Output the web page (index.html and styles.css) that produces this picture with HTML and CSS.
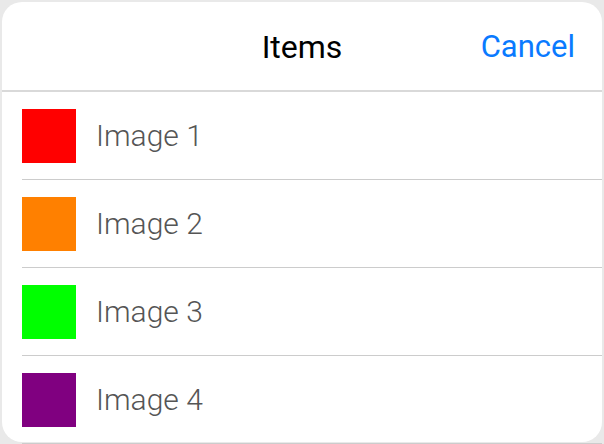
FILE: index.html
```html
<!DOCTYPE html>
<html>
<head>
<meta charset="utf-8">
<link rel="stylesheet" href="styles.css">
</head>
<body>
<div class="sheet">
  <div class="header">
    <div class="title">Items</div>
    <div class="cancel">Cancel</div>
  </div>
  <ul class="list">
    <li class="row"><span class="swatch red"></span><span class="label">Image 1</span></li>
    <li class="row"><span class="swatch orange"></span><span class="label">Image 2</span></li>
    <li class="row"><span class="swatch green"></span><span class="label">Image 3</span></li>
    <li class="row"><span class="swatch purple"></span><span class="label">Image 4</span></li>
  </ul>
</div>
</body>
</html>
```
FILE: styles.css
```css
html, body {
  margin: 0;
  padding: 0;
  background: #e9e9e9;
  font-family: Roboto, "Noto Sans", sans-serif;
}
.sheet {
  margin: 2px;
  width: 600px;
  height: 440px;
  background: #fff;
  border-radius: 20px;
}
.header {
  height: 88px;
  border-bottom: 2px solid #d9d9d9;
  display: grid;
  grid-template-columns: 1fr auto 1fr;
  align-items: center;
}
.title {
  grid-column: 2;
  font-size: 32px;
  color: #000;
  padding-top: 1px;
}
.cancel {
  grid-column: 3;
  justify-self: end;
  padding-right: 27px;
  font-size: 31px;
  color: #0a7aff;
}
.list {
  list-style: none;
  margin: 0;
  padding: 0 0 0 20px;
}
.row {
  height: 87px;
  border-bottom: 1px solid #cccccc;
  display: flex;
  align-items: center;
  gap: 20px;
}
.swatch {
  width: 54px;
  height: 54px;
  flex: none;
}
.red { background: #ff0000; }
.orange { background: #ff8000; }
.green { background: #00ff00; }
.purple { background: #800080; }
.label {
  font-size: 30px;
  font-weight: 300;
  color: #555;
}
```
